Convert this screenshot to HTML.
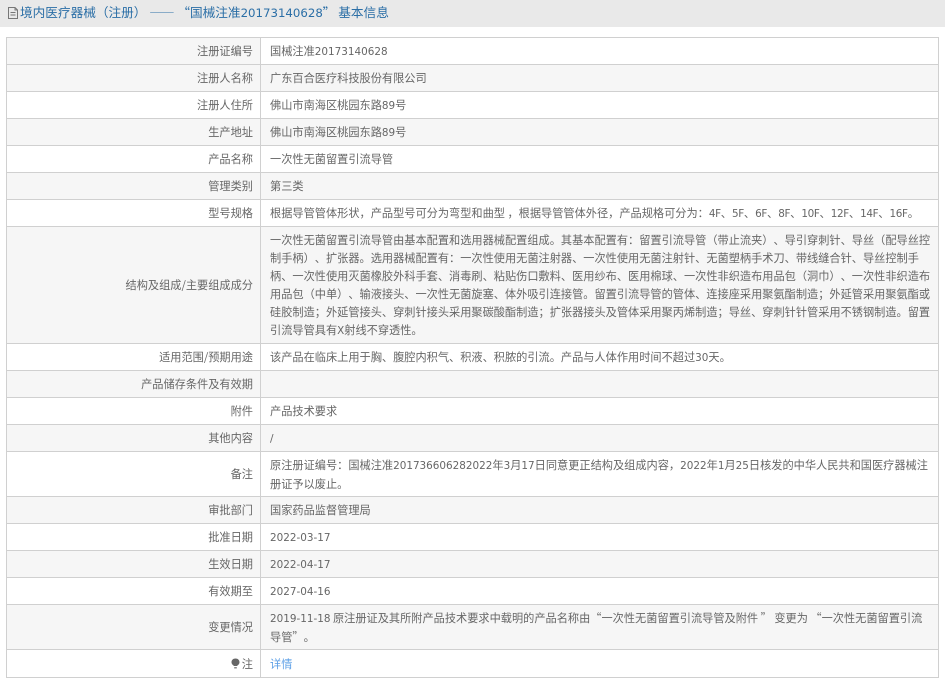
<!DOCTYPE html>
<html lang="zh"><head><meta charset="utf-8"><style>
html,body{margin:0;padding:0;background:#fff;width:945px;height:685px;overflow:hidden}
body{font-family:"Noto Sans CJK SC","WenQuanYi Zen Hei",sans-serif;color:#666;text-spacing-trim:space-all;font-kerning:none}
i{font-style:normal;font-family:"DejaVu Sans",sans-serif;font-size:.93em;position:relative;top:.6px}
u{text-decoration:none;font-style:normal;font-family:"DejaVu Sans",sans-serif;font-size:.93em;position:relative;top:.6px;letter-spacing:-.35px}
.hd{position:absolute;left:0;top:0;width:945px;height:27px;background:#e9e9e9;color:#2a6ea6;font-size:12.65px;line-height:24px;white-space:nowrap}
.hd i{top:0}
.hd svg{position:absolute;left:7px;top:6px}
.hd span{position:absolute;left:20px;top:0}
.r{position:absolute;left:6px;width:931px;border:1px solid #d0d0d0;border-top:0;box-sizing:content-box;font-size:11.2px;line-height:18px}
.r.g{background:#f6f6f6}
.l{position:absolute;left:0;top:0;bottom:0;border-right:1px solid #d0d0d0;width:253px;display:flex;align-items:center;justify-content:flex-end}
.l b{font-weight:normal;margin-right:7px}
.v{position:absolute;left:263px;top:0;bottom:0;width:665px;display:flex;align-items:center;white-space:nowrap}
a{color:#5a9ee6;text-decoration:none}
.top{position:absolute;left:6px;top:37px;width:933px;height:1px;background:#d0d0d0}
</style></head><body>
<div class="hd"><svg width="12" height="14" viewBox="0 0 12 14"><path d="M1.500 1.500H8L10.500 4V12.500H1.500Z M8 1.500V4H10.500 M3.500 6.500H8.500 M3.500 9H8.500" fill="none" stroke="#777" stroke-width="1"/></svg><span>境内医疗器械（注册） —— “国械注准<i>20173140628</i>” 基本信息</span></div>
<div class="top"></div>
<div class="r" style="top:38px;height:26px"><div class="l" style="background:#f6f6f6"><b>注册证编号</b></div><div class="v">国械注准<i>20173140628</i></div></div>
<div class="r g" style="top:65px;height:26px"><div class="l"><b>注册人名称</b></div><div class="v">广东百合医疗科技股份有限公司</div></div>
<div class="r" style="top:92px;height:26px"><div class="l"><b>注册人住所</b></div><div class="v">佛山市南海区桃园东路<i>89</i>号</div></div>
<div class="r g" style="top:119px;height:26px"><div class="l"><b>生产地址</b></div><div class="v">佛山市南海区桃园东路<i>89</i>号</div></div>
<div class="r" style="top:146px;height:26px"><div class="l"><b>产品名称</b></div><div class="v">一次性无菌留置引流导管</div></div>
<div class="r g" style="top:173px;height:26px"><div class="l"><b>管理类别</b></div><div class="v">第三类</div></div>
<div class="r" style="top:200px;height:26px"><div class="l"><b>型号规格</b></div><div class="v">根据导管管体形状，产品型号可分为弯型和曲型 ，根据导管管体外径，产品规格可分为：<u>4F</u>、<u>5F</u>、<u>6F</u>、<u>8F</u>、<u>10F</u>、<u>12F</u>、<u>14F</u>、<u>16F</u>。</div></div>
<div class="r g" style="top:227px;height:116px"><div class="l"><b>结构及组成/主要组成成分</b></div><div class="v"><div>一次性无菌留置引流导管由基本配置和选用器械配置组成。其基本配置有：留置引流导管（带止流夹）、导引穿刺针、导丝（配导丝控<br>制手柄）、扩张器。选用器械配置有：一次性使用无菌注射器、一次性使用无菌注射针、无菌塑柄手术刀、带线缝合针、导丝控制手<br>柄、一次性使用灭菌橡胶外科手套、消毒刷、粘贴伤口敷料、医用纱布、医用棉球、一次性非织造布用品包（洞巾）、一次性非织造布<br>用品包（中单）、输液接头、一次性无菌旋塞、体外吸引连接管。留置引流导管的管体、连接座采用聚氨酯制造；外延管采用聚氨酯或<br>硅胶制造；外延管接头、穿刺针接头采用聚碳酸酯制造；扩张器接头及管体采用聚丙烯制造；导丝、穿刺针针管采用不锈钢制造。留置<br>引流导管具有<i>X</i>射线不穿透性。</div></div></div>
<div class="r" style="top:344px;height:26px"><div class="l"><b>适用范围/预期用途</b></div><div class="v">该产品在临床上用于胸、腹腔内积气、积液、积脓的引流。产品与人体作用时间不超过<i>30</i>天。</div></div>
<div class="r g" style="top:371px;height:26px"><div class="l"><b>产品储存条件及有效期</b></div><div class="v"></div></div>
<div class="r" style="top:398px;height:26px"><div class="l"><b>附件</b></div><div class="v">产品技术要求</div></div>
<div class="r g" style="top:425px;height:26px"><div class="l"><b>其他内容</b></div><div class="v"><i>/</i></div></div>
<div class="r" style="top:452px;height:44px"><div class="l"><b>备注</b></div><div class="v"><div>原注册证编号：国械注准<i>201736606282022</i>年<i>3</i>月<i>17</i>日同意更正结构及组成内容，<i>2022</i>年<i>1</i>月<i>25</i>日核发的中华人民共和国医疗器械注<br>册证予以废止。</div></div></div>
<div class="r g" style="top:497px;height:26px"><div class="l"><b>审批部门</b></div><div class="v">国家药品监督管理局</div></div>
<div class="r" style="top:524px;height:26px"><div class="l"><b>批准日期</b></div><div class="v"><i>2022-03-17</i></div></div>
<div class="r g" style="top:551px;height:26px"><div class="l"><b>生效日期</b></div><div class="v"><i>2022-04-17</i></div></div>
<div class="r" style="top:578px;height:26px"><div class="l"><b>有效期至</b></div><div class="v"><i>2027-04-16</i></div></div>
<div class="r g" style="top:605px;height:44px"><div class="l"><b>变更情况</b></div><div class="v"><div><i>2019-11-18</i> 原注册证及其所附产品技术要求中载明的产品名称由“一次性无菌留置引流导管及附件 ” 变更为 “一次性无菌留置引流<br>导管”。</div></div></div>
<div class="r" style="top:650px;height:27px"><div class="l"><b><svg width="9" height="11" viewBox="0 0 9 11" style="vertical-align:-1px;margin-right:2px"><path d="M4.500 .5C2 .5 .5 2.200 .5 4.200C.5 6 2 7 3 8H6C7 7 8.500 6 8.500 4.200C8.500 2.200 7 .5 4.500 .5Z" fill="#666"/><path d="M3.200 9H5.800V10.500H3.200Z" fill="#888"/></svg>注</b></div><div class="v"><a>详情</a></div></div>
</body></html>
